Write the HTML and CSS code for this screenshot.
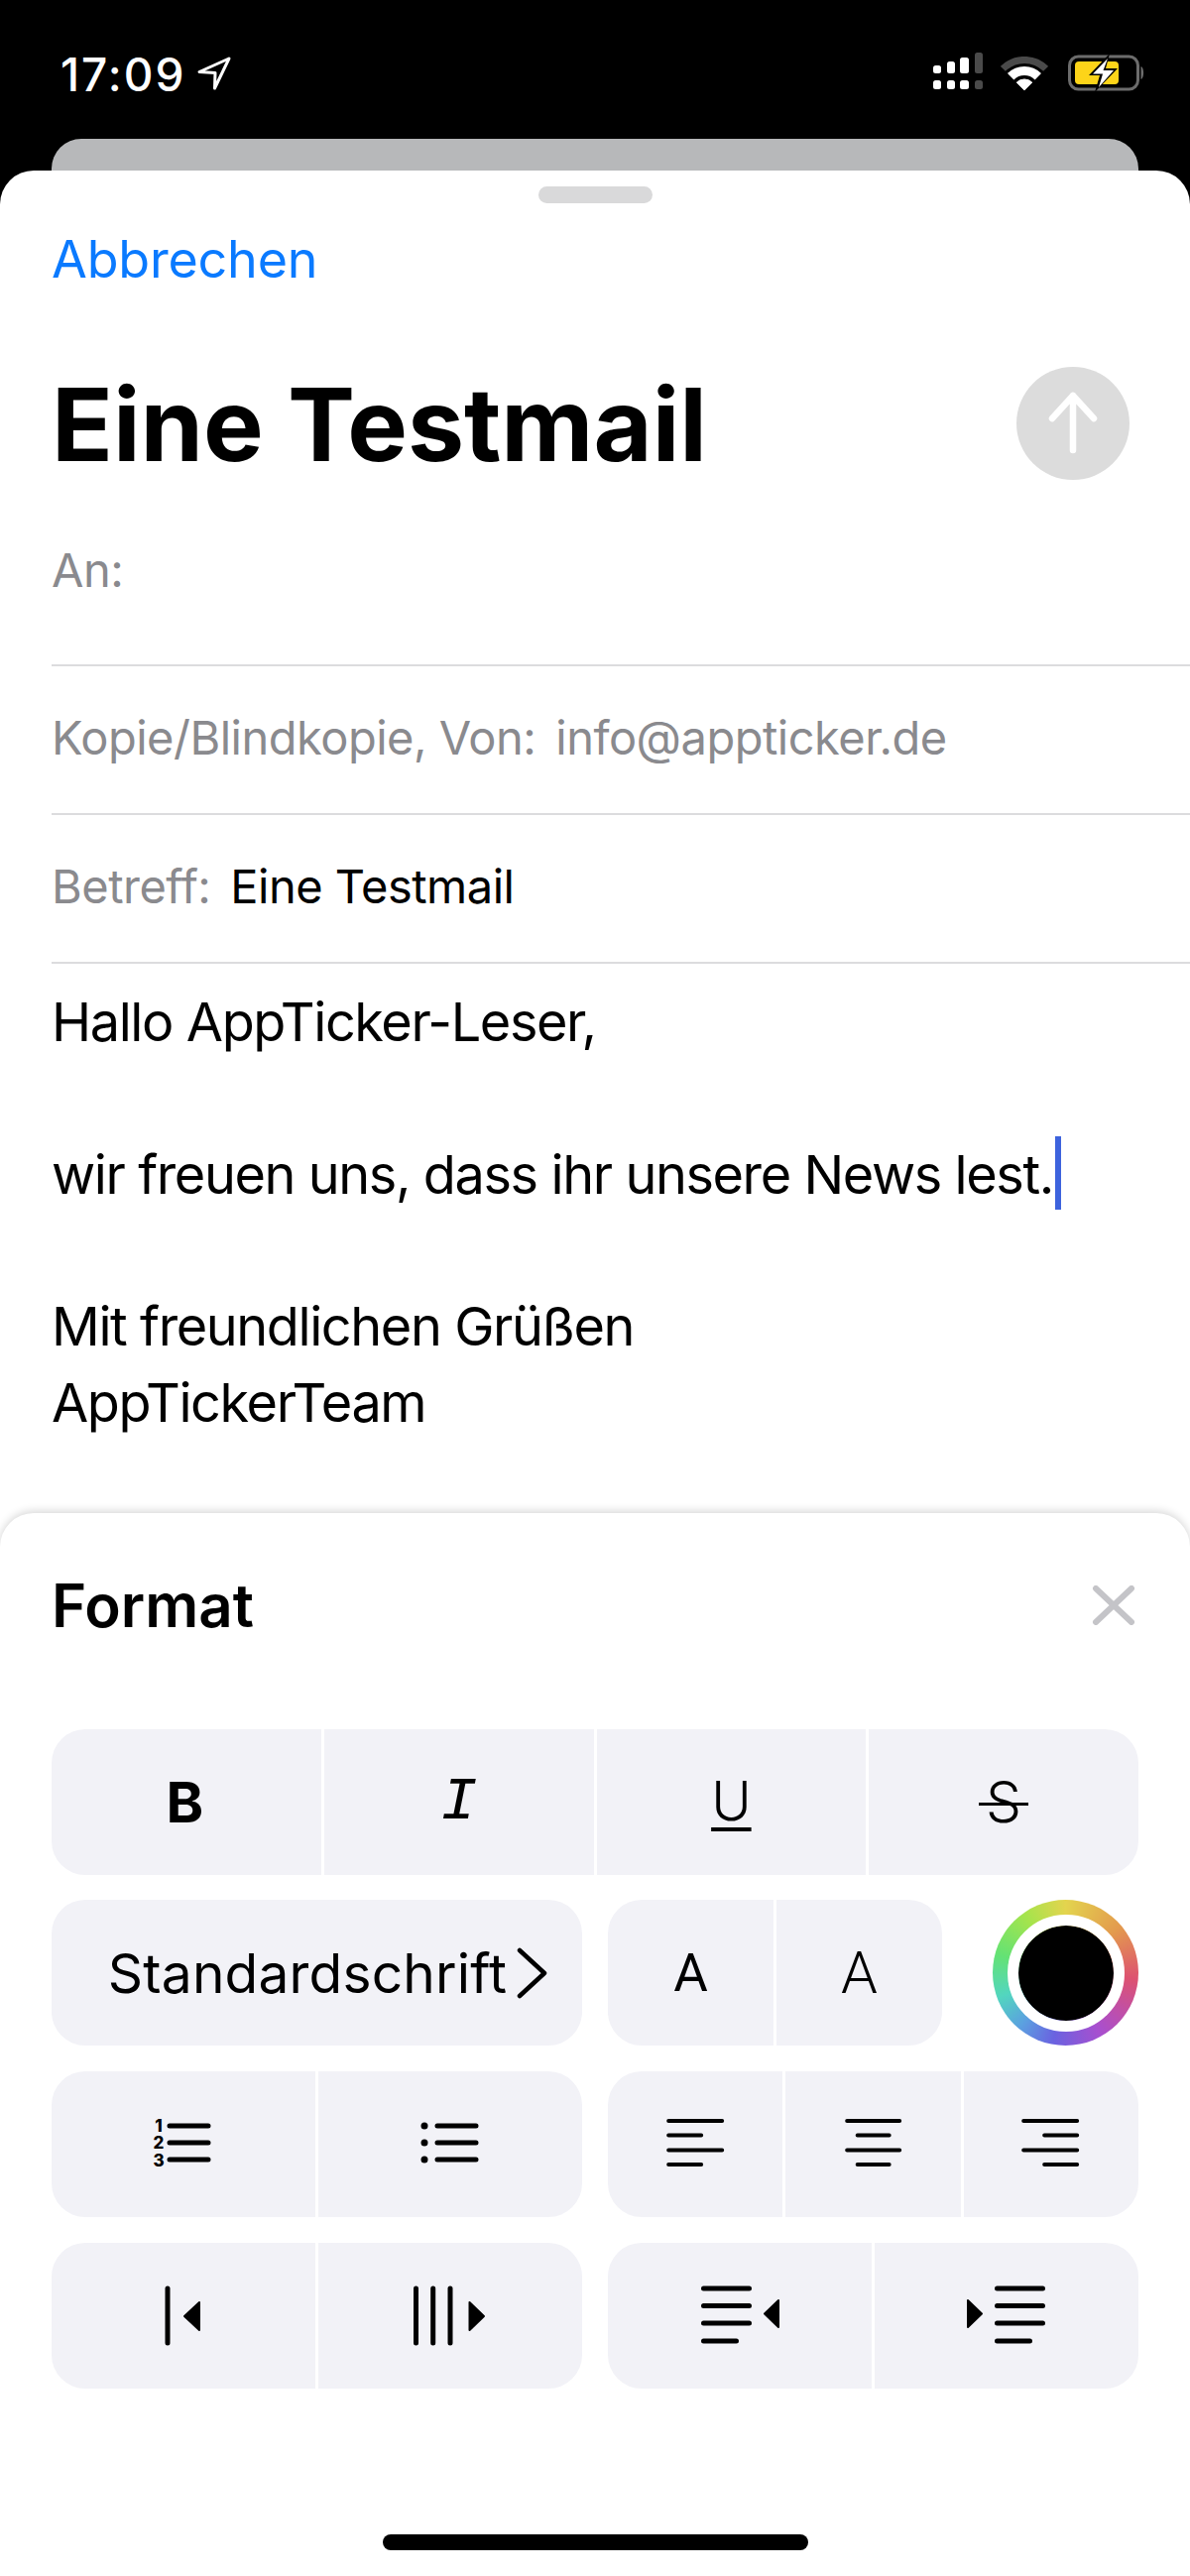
FILE: index.html
```html
<!DOCTYPE html>
<html lang="de">
<head>
  <meta charset="UTF-8" />
  <meta name="viewport" content="width=device-width, initial-scale=1.0"/>
  <title>Eine Testmail</title>
  <link rel="stylesheet" href="styles.css">
</head>
<body>
  <!-- Status bar -->
  <div class="status-bar">
    <div class="status-time">
      <span>17:09</span>
      <svg class="location" width="36" height="36" viewBox="0 0 36 36">
        <path d="M33 3 L3 16.500 L19 17.500 L18.500 33 Z" fill="none" stroke="#fff" stroke-width="3" stroke-linejoin="round"/>
      </svg>
    </div>
    <div class="status-icons">
      <svg class="signal" width="52" height="40" viewBox="0 0 52 40">
        <g fill="#fff">
          <rect x="1" y="15" width="8" height="8" rx="2.500"/>
          <rect x="15" y="11" width="8" height="12" rx="2.500"/>
          <rect x="28" y="7" width="9" height="16" rx="2.500"/>
          <rect x="1" y="30" width="8" height="9" rx="2.500"/>
          <rect x="15" y="30" width="8" height="9" rx="2.500"/>
          <rect x="28" y="30" width="9" height="9" rx="2.500"/>
        </g>
        <g fill="#4a4a4a">
          <rect x="43" y="2" width="8" height="21" rx="2.500"/>
          <rect x="43" y="30" width="8" height="9" rx="2.500"/>
        </g>
      </svg>
      <svg class="wifi" width="48" height="36" viewBox="0 0 48 36">
        <path d="M2.400 12.400 A30.500 30.500 0 0 1 45.600 12.400" fill="none" stroke="#4a4a4a" stroke-width="7"/>
        <path d="M10.200 20.200 A19.500 19.500 0 0 1 37.800 20.200" fill="none" stroke="#fff" stroke-width="9"/>
        <path d="M24 34 L16.200 26.200 A11 11 0 0 1 31.800 26.200 Z" fill="#fff" stroke="#fff" stroke-width="1" stroke-linejoin="round"/>
      </svg>
      <svg class="battery" width="78" height="38" viewBox="0 0 78 38">
        <rect x="1.500" y="2" width="69" height="33" rx="9" fill="none" stroke="#6c6c6c" stroke-width="3"/>
        <rect x="7" y="7" width="44" height="23" rx="4" fill="#fdd419"/>
        <path d="M73.500 12 C77 13 77 24 73.500 25 Z" fill="#6c6c6c"/>
        <path d="M42 -1 L21 21 H32 L27 38 L50 14 H38 Z" fill="#000"/>
        <path d="M40 4 L25 19.500 H35 L31 33 L46 16 H35.500 Z" fill="#fff"/>
      </svg>
    </div>
  </div>

  <!-- Mail behind the sheet -->
  <div class="peek"></div>

  <div class="sheet">
    <div class="handle"></div>
    <div class="cancel">Abbrechen</div>

    <div class="head">
      <h1>Eine Testmail</h1>
      <div class="send-btn">
        <svg width="60" height="72" viewBox="0 0 60 72">
          <path d="M30 63 V8 M9 31 L30 8 L51 31" fill="none" stroke="#fff" stroke-width="6.500" stroke-linecap="round" stroke-linejoin="round"/>
        </svg>
      </div>
    </div>

    <div class="field field-to"><span class="label">An:</span></div>
    <div class="field"><span class="label">Kopie/Blindkopie, Von:</span><span class="label">info@appticker.de</span></div>
    <div class="field"><span class="label">Betreff:</span><span>Eine Testmail</span></div>

    <div class="mail-body">
      <p>Hallo AppTicker-Leser,</p>
      <p class="spaced">wir freuen uns, dass ihr unsere News lest.<span class="caret"></span></p>
      <p class="spaced">Mit freundlichen Grüßen</p>
      <p>AppTickerTeam</p>
    </div>

    <!-- Format panel -->
    <div class="format">
      <div class="format-head">
        <h2>Format</h2>
        <svg width="44" height="40" viewBox="0 0 44 40">
          <path d="M4 3 L40 37 M40 3 L4 37" fill="none" stroke="#c4c4c8" stroke-width="6" stroke-linecap="round"/>
        </svg>
      </div>

      <div class="format-row">
        <div class="seg grow">
          <div class="cell"><span class="fmt-b">B</span></div>
          <div class="cell"><span class="fmt-i">I</span></div>
          <div class="cell"><span class="fmt-u">U</span></div>
          <div class="cell"><span class="fmt-s">S</span></div>
        </div>
      </div>

      <div class="format-row row-gap">
        <div class="seg half">
          <div class="cell font-cell">
            <span>Standardschrift</span>
            <svg width="32" height="52" viewBox="0 0 32 52">
              <path d="M3 3 L28 26 L3 49" fill="none" stroke="#000" stroke-width="4.500" stroke-linecap="round" stroke-linejoin="round"/>
            </svg>
          </div>
        </div>
        <div class="seg size-seg">
          <div class="cell"><span class="a-small">A</span></div>
          <div class="cell"><span class="a-large">A</span></div>
        </div>
        <div class="color-well"><div class="color-dot"></div></div>
      </div>

      <div class="format-row row-gap">
        <div class="seg half">
          <div class="cell">
            <svg class="icon" viewBox="0 0 266 147">
              <path class="lines thick" d="M119 55 H158 M119 72 H158 M119 89 H158"/>
              <g class="nums">
                <text x="108" y="61">1</text>
                <text x="108" y="78">2</text>
                <text x="108" y="96">3</text>
              </g>
            </svg>
          </div>
          <div class="cell">
            <svg class="icon" viewBox="0 0 266 147">
              <circle cx="107" cy="55" r="3.500"/>
              <circle cx="107" cy="72" r="3.500"/>
              <circle cx="107" cy="89" r="3.500"/>
              <path class="lines thick" d="M120 55 H159 M120 72 H159 M120 89 H159"/>
            </svg>
          </div>
        </div>
        <div class="seg half">
          <div class="cell">
            <svg class="icon" viewBox="0 0 176 147">
              <path class="lines" d="M61 50 H115 M61 64.500 H94 M61 79.500 H115 M61 94 H94"/>
            </svg>
          </div>
          <div class="cell">
            <svg class="icon" viewBox="0 0 176 147">
              <path class="lines" d="M62 50 H115 M72.500 64.500 H104.500 M62 79.500 H115 M72.500 94 H104.500"/>
            </svg>
          </div>
          <div class="cell">
            <svg class="icon" viewBox="0 0 176 147">
              <path class="lines" d="M60 50 H114 M81 64.500 H114 M60 79.500 H114 M81 94 H114"/>
            </svg>
          </div>
        </div>
      </div>

      <div class="format-row">
        <div class="seg half">
          <div class="cell">
            <svg class="icon" viewBox="0 0 266 147">
              <path class="lines thick" d="M117 46 V101"/>
              <path class="tri" d="M134 74 L149 60 V88 Z"/>
            </svg>
          </div>
          <div class="cell">
            <svg class="icon" viewBox="0 0 266 147">
              <path class="lines thick" d="M98.500 46 V101 M115.700 46 V101 M133 46 V101"/>
              <path class="tri" d="M167 74 L152.500 60 V88 Z"/>
            </svg>
          </div>
        </div>
        <div class="seg half">
          <div class="cell">
            <svg class="icon" viewBox="0 0 266 147">
              <path class="lines thick" d="M96.500 46 H142.500 M96.500 63.500 H142.500 M96.500 81 H142.500 M96.500 99 H129.500"/>
              <path class="tri" d="M158 71.500 L172 58 V85 Z"/>
            </svg>
          </div>
          <div class="cell">
            <svg class="icon" viewBox="0 0 266 147">
              <path class="lines thick" d="M123.500 46 H169.500 M123.500 63.500 H169.500 M123.500 81 H169.500 M123.500 99 H156.500"/>
              <path class="tri" d="M108 71.500 L94 58 V85 Z"/>
            </svg>
          </div>
        </div>
      </div>

      <div class="home-bar"></div>
    </div>
  </div>
</body>
</html>
```

FILE: styles.css
```css
* {
  box-sizing: border-box;
}

html, body {
  margin: 0;
  height: 2598px;
  overflow: hidden;
}

body {
  display: flex;
  flex-direction: column;
  background: #000;
  color: #000;
  font-family: Inter, 'Liberation Sans', sans-serif;
}

/* Status bar */
.status-bar {
  height: 140px;
  flex: none;
  display: flex;
  justify-content: space-between;
  padding: 52px 45px 0 61px;
  color: #fff;
}

.status-time {
  display: flex;
  align-items: flex-start;
  gap: 11px;
  font-size: 46px;
  font-weight: 500;
  letter-spacing: 2px;
  line-height: 46px;
  height: 46px;
}

.location {
  margin-top: 4px;
}

.status-icons {
  display: flex;
  align-items: flex-start;
}

.signal {
  margin-top: -1px;
}

.wifi {
  margin: 5px 20px 0 17px;
}

.battery {
  margin-top: 3px;
}

.peek {
  height: 32px;
  flex: none;
  margin: 0 52px;
  background: #b7b8ba;
  border-radius: 30px 30px 0 0;
}

/* Compose sheet */
.sheet {
  flex: 1;
  display: flex;
  flex-direction: column;
  background: #fff;
  border-radius: 34px 34px 0 0;
}

.handle {
  width: 115px;
  height: 17px;
  margin: 16px auto 0;
  background: #d9d9da;
  border-radius: 9px;
}

.cancel {
  margin: 22px 0 0 52px;
  font-size: 52px;
  letter-spacing: -0.200px;
  line-height: 70px;
  color: #0a7aff;
}

.head {
  display: flex;
  align-items: center;
  justify-content: space-between;
  height: 114px;
  margin-top: 73px;
  padding: 0 61px 0 52px;
}

h1 {
  margin: 2px 0 0;
  font-size: 102px;
  font-weight: 700;
  line-height: 1;
}

.send-btn {
  width: 114px;
  height: 114px;
  display: flex;
  align-items: center;
  justify-content: center;
  background: #dcdcdc;
  border-radius: 50%;
}

.field {
  display: flex;
  align-items: center;
  gap: 20px;
  height: 150px;
  margin-left: 52px;
  padding-bottom: 6px;
  border-bottom: 2px solid #dcdcde;
  font-size: 47px;
  letter-spacing: -0.500px;
}

.field-to {
  height: 188px;
}

.label {
  color: #8a8a8e;
}

.mail-body {
  padding: 21px 52px 0;
  font-size: 54px;
  letter-spacing: -1.400px;
  line-height: 76.500px;
}

.mail-body p {
  margin: 0;
}

.mail-body .spaced {
  margin-top: 76.500px;
}

.caret {
  display: inline-block;
  width: 6px;
  height: 74px;
  margin-left: 2px;
  vertical-align: -16px;
  background: #3d63dd;
}

/* Format panel */
.format {
  margin-top: auto;
  height: 1072px;
  flex: none;
  padding: 0 52px;
  display: flex;
  flex-direction: column;
  gap: 25px;
  background: #fff;
  border-radius: 34px 34px 0 0;
  box-shadow: 0 -2px 8px rgba(0, 0, 0, 0.16);
}

.format-head {
  height: 193px;
  padding: 0 3px 8px 0;
  display: flex;
  align-items: center;
  justify-content: space-between;
}

h2 {
  margin: 0;
  font-size: 60px;
  font-weight: 600;
}

.format-row {
  display: flex;
  gap: 26px;
  height: 147px;
  flex: none;
}

.row-gap {
  margin-bottom: 1px;
}

.seg {
  display: flex;
  gap: 3px;
  height: 147px;
  border-radius: 34px;
  overflow: hidden;
}

.seg.grow {
  width: 100%;
}

.seg.half {
  width: 535px;
}

.size-seg {
  width: 337px;
}

.cell {
  flex: 1;
  min-width: 0;
  display: flex;
  align-items: center;
  justify-content: center;
  background: #f2f2f7;
}

.fmt-b {
  margin-right: 3px;
  font-size: 57px;
  font-weight: 700;
}

.fmt-i {
  font-family: 'Liberation Mono', monospace;
  font-size: 62px;
  font-style: italic;
}

.fmt-u {
  margin-bottom: 3px;
  font-size: 55px;
  font-weight: 300;
  text-decoration: underline;
  text-decoration-thickness: 4px;
  text-underline-offset: 7px;
}

.fmt-s {
  position: relative;
  font-size: 57px;
  font-weight: 300;
}

.fmt-s::after {
  content: "";
  position: absolute;
  left: -7px;
  right: -7px;
  top: 50%;
  height: 3px;
  background: #000;
}

.font-cell {
  gap: 10px;
  padding-left: 23px;
  font-size: 55px;
  letter-spacing: 0.200px;
}

.a-small {
  font-family: Roboto, sans-serif;
  font-size: 53px;
}

.a-large {
  font-family: Roboto, sans-serif;
  font-size: 59px;
  font-weight: 300;
}

.color-well {
  width: 147px;
  height: 147px;
  margin-left: 25px;
  flex: none;
  display: flex;
  align-items: center;
  justify-content: center;
  border-radius: 50%;
  background: conic-gradient(#e3d44e 0deg, #e39a4e 50deg, #dd5270 95deg, #c04fa8 125deg, #a84fcf 150deg, #6a62e0 190deg, #5ba0e0 220deg, #52d6bf 250deg, #64e274 285deg, #a5e44c 325deg, #e3d44e 360deg);
}

.color-dot {
  width: 96px;
  height: 96px;
  box-sizing: content-box;
  background: #000;
  border: 11px solid #fff;
  border-radius: 50%;
  background-clip: padding-box;
}

.icon {
  width: 100%;
  height: 100%;
  display: block;
}

.lines {
  fill: none;
  stroke: #000;
  stroke-width: 4px;
  stroke-linecap: round;
}

.lines.thick {
  stroke-width: 5px;
}

.tri {
  fill: #000;
  stroke: #000;
  stroke-width: 2px;
  stroke-linejoin: round;
}

.nums {
  font-size: 17px;
  font-weight: 800;
  text-anchor: middle;
}

.home-bar {
  width: 429px;
  height: 16px;
  margin: auto auto 26px;
  background: #000;
  border-radius: 8px;
}
```
